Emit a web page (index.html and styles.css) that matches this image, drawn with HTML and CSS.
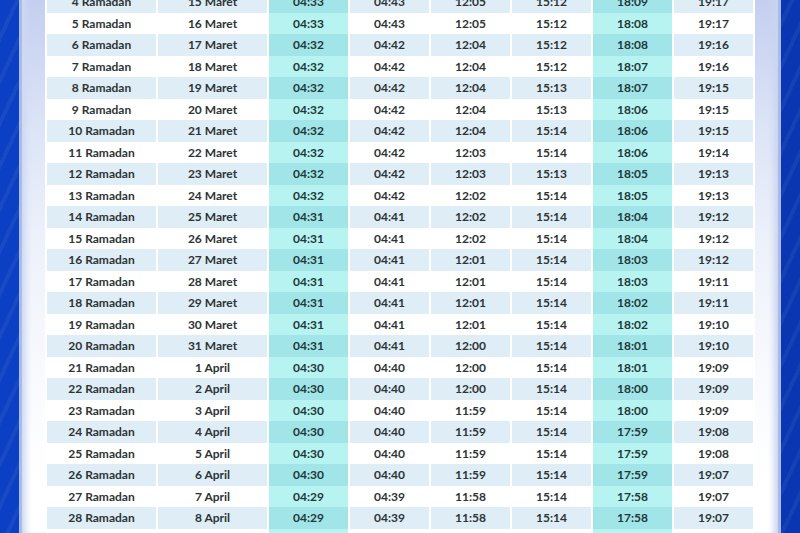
FILE: index.html
```html
<!DOCTYPE html>
<html lang="id">
<head>
<meta charset="utf-8">
<title>Jadwal Imsakiyah Ramadan</title>
<link rel="stylesheet" href="styles.css">
</head>
<body>
<div class="page">
  <div class="frame">
    <table class="schedule">
      <colgroup>
        <col class="c-wide"><col class="c-wide">
        <col class="c-time"><col class="c-time"><col class="c-time"><col class="c-time"><col class="c-time"><col class="c-time">
      </colgroup>
      <tbody>
        <tr class="alt"><td>4 Ramadan</td><td>15 Maret</td><td class="hl">04:33</td><td>04:43</td><td>12:05</td><td>15:12</td><td class="hl">18:09</td><td>19:17</td></tr>
        <tr><td>5 Ramadan</td><td>16 Maret</td><td class="hl">04:33</td><td>04:43</td><td>12:05</td><td>15:12</td><td class="hl">18:08</td><td>19:17</td></tr>
        <tr class="alt"><td>6 Ramadan</td><td>17 Maret</td><td class="hl">04:32</td><td>04:42</td><td>12:04</td><td>15:12</td><td class="hl">18:08</td><td>19:16</td></tr>
        <tr><td>7 Ramadan</td><td>18 Maret</td><td class="hl">04:32</td><td>04:42</td><td>12:04</td><td>15:12</td><td class="hl">18:07</td><td>19:16</td></tr>
        <tr class="alt"><td>8 Ramadan</td><td>19 Maret</td><td class="hl">04:32</td><td>04:42</td><td>12:04</td><td>15:13</td><td class="hl">18:07</td><td>19:15</td></tr>
        <tr><td>9 Ramadan</td><td>20 Maret</td><td class="hl">04:32</td><td>04:42</td><td>12:04</td><td>15:13</td><td class="hl">18:06</td><td>19:15</td></tr>
        <tr class="alt"><td>10 Ramadan</td><td>21 Maret</td><td class="hl">04:32</td><td>04:42</td><td>12:04</td><td>15:14</td><td class="hl">18:06</td><td>19:15</td></tr>
        <tr><td>11 Ramadan</td><td>22 Maret</td><td class="hl">04:32</td><td>04:42</td><td>12:03</td><td>15:14</td><td class="hl">18:06</td><td>19:14</td></tr>
        <tr class="alt"><td>12 Ramadan</td><td>23 Maret</td><td class="hl">04:32</td><td>04:42</td><td>12:03</td><td>15:13</td><td class="hl">18:05</td><td>19:13</td></tr>
        <tr><td>13 Ramadan</td><td>24 Maret</td><td class="hl">04:32</td><td>04:42</td><td>12:02</td><td>15:14</td><td class="hl">18:05</td><td>19:13</td></tr>
        <tr class="alt"><td>14 Ramadan</td><td>25 Maret</td><td class="hl">04:31</td><td>04:41</td><td>12:02</td><td>15:14</td><td class="hl">18:04</td><td>19:12</td></tr>
        <tr><td>15 Ramadan</td><td>26 Maret</td><td class="hl">04:31</td><td>04:41</td><td>12:02</td><td>15:14</td><td class="hl">18:04</td><td>19:12</td></tr>
        <tr class="alt"><td>16 Ramadan</td><td>27 Maret</td><td class="hl">04:31</td><td>04:41</td><td>12:01</td><td>15:14</td><td class="hl">18:03</td><td>19:12</td></tr>
        <tr><td>17 Ramadan</td><td>28 Maret</td><td class="hl">04:31</td><td>04:41</td><td>12:01</td><td>15:14</td><td class="hl">18:03</td><td>19:11</td></tr>
        <tr class="alt"><td>18 Ramadan</td><td>29 Maret</td><td class="hl">04:31</td><td>04:41</td><td>12:01</td><td>15:14</td><td class="hl">18:02</td><td>19:11</td></tr>
        <tr><td>19 Ramadan</td><td>30 Maret</td><td class="hl">04:31</td><td>04:41</td><td>12:01</td><td>15:14</td><td class="hl">18:02</td><td>19:10</td></tr>
        <tr class="alt"><td>20 Ramadan</td><td>31 Maret</td><td class="hl">04:31</td><td>04:41</td><td>12:00</td><td>15:14</td><td class="hl">18:01</td><td>19:10</td></tr>
        <tr><td>21 Ramadan</td><td>1 April</td><td class="hl">04:30</td><td>04:40</td><td>12:00</td><td>15:14</td><td class="hl">18:01</td><td>19:09</td></tr>
        <tr class="alt"><td>22 Ramadan</td><td>2 April</td><td class="hl">04:30</td><td>04:40</td><td>12:00</td><td>15:14</td><td class="hl">18:00</td><td>19:09</td></tr>
        <tr><td>23 Ramadan</td><td>3 April</td><td class="hl">04:30</td><td>04:40</td><td>11:59</td><td>15:14</td><td class="hl">18:00</td><td>19:09</td></tr>
        <tr class="alt"><td>24 Ramadan</td><td>4 April</td><td class="hl">04:30</td><td>04:40</td><td>11:59</td><td>15:14</td><td class="hl">17:59</td><td>19:08</td></tr>
        <tr><td>25 Ramadan</td><td>5 April</td><td class="hl">04:30</td><td>04:40</td><td>11:59</td><td>15:14</td><td class="hl">17:59</td><td>19:08</td></tr>
        <tr class="alt"><td>26 Ramadan</td><td>6 April</td><td class="hl">04:30</td><td>04:40</td><td>11:59</td><td>15:14</td><td class="hl">17:59</td><td>19:07</td></tr>
        <tr><td>27 Ramadan</td><td>7 April</td><td class="hl">04:29</td><td>04:39</td><td>11:58</td><td>15:14</td><td class="hl">17:58</td><td>19:07</td></tr>
        <tr class="alt"><td>28 Ramadan</td><td>8 April</td><td class="hl">04:29</td><td>04:39</td><td>11:58</td><td>15:14</td><td class="hl">17:58</td><td>19:07</td></tr>
        <tr><td>29 Ramadan</td><td>9 April</td><td class="hl">04:29</td><td>04:39</td><td>11:58</td><td>15:14</td><td class="hl">17:57</td><td>19:06</td></tr>
      </tbody>
    </table>
  </div>
</div>
</body>
</html>
```

FILE: styles.css
```css
* { box-sizing: border-box; }

html, body {
  margin: 0;
  padding: 0;
}

body {
  width: 800px;
  height: 533px;
  overflow: hidden;
  font-family: Lato, "Open Sans", sans-serif;
}

.page {
  display: flex;
  height: 533px;
  padding: 0 19px;
  background:
    repeating-linear-gradient(115deg, rgba(255,255,255,0) 0 14px, rgba(255,255,255,0.05) 14px 18px),
    linear-gradient(90deg, #0c40c4 0%, #0b3cbd 50%, #0a36b2 100%);
}

.frame {
  flex: 1;
  height: 533px;
  overflow: hidden;
  padding: 0 28px;
  background: linear-gradient(180deg, #c4cff0 0px, #dbe3f6 120px, #edf1fa 240px, #f7f9fd 360px, #ffffff 480px);
  box-shadow:
    inset 3px 0 0 #a9bce9,
    inset 11px 0 6px -4px #cdd9f3,
    inset -3px 0 0 #a9bae6,
    inset -11px 0 6px -4px #c9d4ef;
}

.schedule {
  width: 706px;
  margin-top: -8.8px;
  table-layout: fixed;
  border-collapse: separate;
  border-spacing: 2px 0;
  margin-left: -2px;
  background: #ffffff;
  color: #2d3434;
  font-size: 12px;
  font-weight: 700;
}

.schedule { width: 710px; }

.c-wide { width: 109px; }
.c-time { width: 79px; }

.schedule tr { height: 21.5px; }

.schedule td {
  padding: 0;
  height: 21.5px;
  text-align: center;
  vertical-align: middle;
  background: #ffffff;
  white-space: nowrap;
  line-height: 21.5px;
}

.schedule tr.alt td { background: #dfedf7; }

.schedule td.hl { background: #b6f3f1; color: #213838; }
.schedule tr.alt td.hl { background: #a2e5e9; }
```
